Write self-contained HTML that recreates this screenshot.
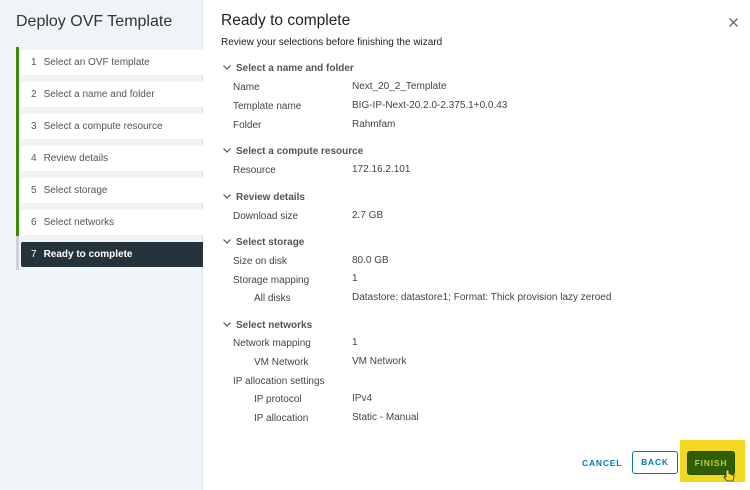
<!DOCTYPE html>
<html><head><meta charset="utf-8"><style>
*{margin:0;padding:0;box-sizing:border-box}
body{width:750px;height:490px;overflow:hidden;background:#fff;font-family:"Liberation Sans",sans-serif;position:relative;color:#333}
.side{position:absolute;left:0;top:0;width:203px;height:490px;background:#eff4f7;border-right:1px solid #dde3e7}
.t{position:absolute;white-space:nowrap}
.bar{position:absolute;left:16px;width:3px}
.it{position:absolute;left:21px;width:182px;height:25px;background:#fff;font-size:10px;color:#555;line-height:25px;padding-left:10px}
.it b{font-weight:normal;margin-right:7px}
.act{background:#25333d;color:#fff;font-weight:bold}
.h{font-size:10px;font-weight:bold;color:#555;left:223px}
.h svg{margin-right:5px;vertical-align:1px}
.l{font-size:10px;color:#444;left:233px}
.l2{left:254px}
.v{font-size:10px;color:#444;left:352px}
</style></head><body>
<div class="side"></div>
<div class="t" style="left:16px;top:13px;font-size:16px;color:#333">Deploy OVF Template</div>
<div class="bar" style="top:47px;height:189px;background:#3f8a0b"></div>
<div class="bar" style="top:236px;height:34px;background:#cdd3d8"></div>
<div class="it" style="top:50px"><b>1</b>Select an OVF template</div>
<div class="it" style="top:82px"><b>2</b>Select a name and folder</div>
<div class="it" style="top:114px"><b>3</b>Select a compute resource</div>
<div class="it" style="top:146px"><b>4</b>Review details</div>
<div class="it" style="top:178px"><b>5</b>Select storage</div>
<div class="it" style="top:210px"><b>6</b>Select networks</div>
<div class="it act" style="top:242px;border-radius:2px 0 0 2px"><b>7</b>Ready to complete</div>

<div class="t" style="left:221px;top:12px;font-size:15.5px;color:#222">Ready to complete</div>
<div class="t" style="left:221px;top:37px;font-size:10px;color:#222">Review your selections before finishing the wizard</div>
<svg style="position:absolute;left:729px;top:18px" width="9" height="9" viewBox="0 0 9 9"><path d="M.5 .5L8.5 8.5M8.5 .5L.5 8.5" stroke="#666" stroke-width="1.3"/></svg>

<div class="t h" style="top:63px"><svg width="8" height="5" viewBox="0 0 8 5"><path d="M.5 .5L4 4 7.5 .5" fill="none" stroke="#555" stroke-width="1.2"/></svg>Select a name and folder</div>
<div class="t l" style="top:82px">Name</div><div class="t v" style="top:81px">Next_20_2_Template</div>
<div class="t l" style="top:101px">Template name</div><div class="t v" style="top:100px">BIG-IP-Next-20.2.0-2.375.1+0.0.43</div>
<div class="t l" style="top:120px">Folder</div><div class="t v" style="top:119px">Rahmfam</div>

<div class="t h" style="top:146px"><svg width="8" height="5" viewBox="0 0 8 5"><path d="M.5 .5L4 4 7.5 .5" fill="none" stroke="#555" stroke-width="1.2"/></svg>Select a compute resource</div>
<div class="t l" style="top:165px">Resource</div><div class="t v" style="top:164px">172.16.2.101</div>

<div class="t h" style="top:192px"><svg width="8" height="5" viewBox="0 0 8 5"><path d="M.5 .5L4 4 7.5 .5" fill="none" stroke="#555" stroke-width="1.2"/></svg>Review details</div>
<div class="t l" style="top:211px">Download size</div><div class="t v" style="top:210px">2.7 GB</div>

<div class="t h" style="top:237px"><svg width="8" height="5" viewBox="0 0 8 5"><path d="M.5 .5L4 4 7.5 .5" fill="none" stroke="#555" stroke-width="1.2"/></svg>Select storage</div>
<div class="t l" style="top:256px">Size on disk</div><div class="t v" style="top:255px">80.0 GB</div>
<div class="t l" style="top:275px">Storage mapping</div><div class="t v" style="top:273px">1</div>
<div class="t l l2" style="top:293px">All disks</div><div class="t v" style="top:292px">Datastore: datastore1; Format: Thick provision lazy zeroed</div>

<div class="t h" style="top:320px"><svg width="8" height="5" viewBox="0 0 8 5"><path d="M.5 .5L4 4 7.5 .5" fill="none" stroke="#555" stroke-width="1.2"/></svg>Select networks</div>
<div class="t l" style="top:338px">Network mapping</div><div class="t v" style="top:337px">1</div>
<div class="t l l2" style="top:357px">VM Network</div><div class="t v" style="top:356px">VM Network</div>
<div class="t l" style="top:376px">IP allocation settings</div>
<div class="t l l2" style="top:394px">IP protocol</div><div class="t v" style="top:393px">IPv4</div>
<div class="t l l2" style="top:413px">IP allocation</div><div class="t v" style="top:412px">Static - Manual</div>

<div class="t" style="left:582px;top:458px;font-size:8.5px;font-weight:bold;color:#0079b8;letter-spacing:.8px">CANCEL</div>
<div style="position:absolute;left:632px;top:451px;width:46px;height:23px;border:1px solid #0079b8;border-radius:3px;font-size:8.5px;font-weight:bold;color:#0079b8;letter-spacing:.8px;text-align:center;line-height:21px">BACK</div>
<div style="position:absolute;left:680px;top:440px;width:65px;height:42px;background:#f2d91f"></div>
<div style="position:absolute;left:687px;top:451px;width:48px;height:24px;background:#2f5e06;border:1px solid #244b04;border-radius:3px;font-size:8.5px;font-weight:bold;color:#c7c83a;letter-spacing:.8px;text-align:center;line-height:22px">FINISH</div>
<svg style="position:absolute;left:723px;top:469px" width="12" height="13" viewBox="0 0 12 13"><path d="M3 1v7L1.5 7 1 8.5 4 12h6l1-4V6L8 5.5V5L6 4.5V1z" fill="#f2d91f" stroke="#333" stroke-width=".8"/></svg>
</body></html>
